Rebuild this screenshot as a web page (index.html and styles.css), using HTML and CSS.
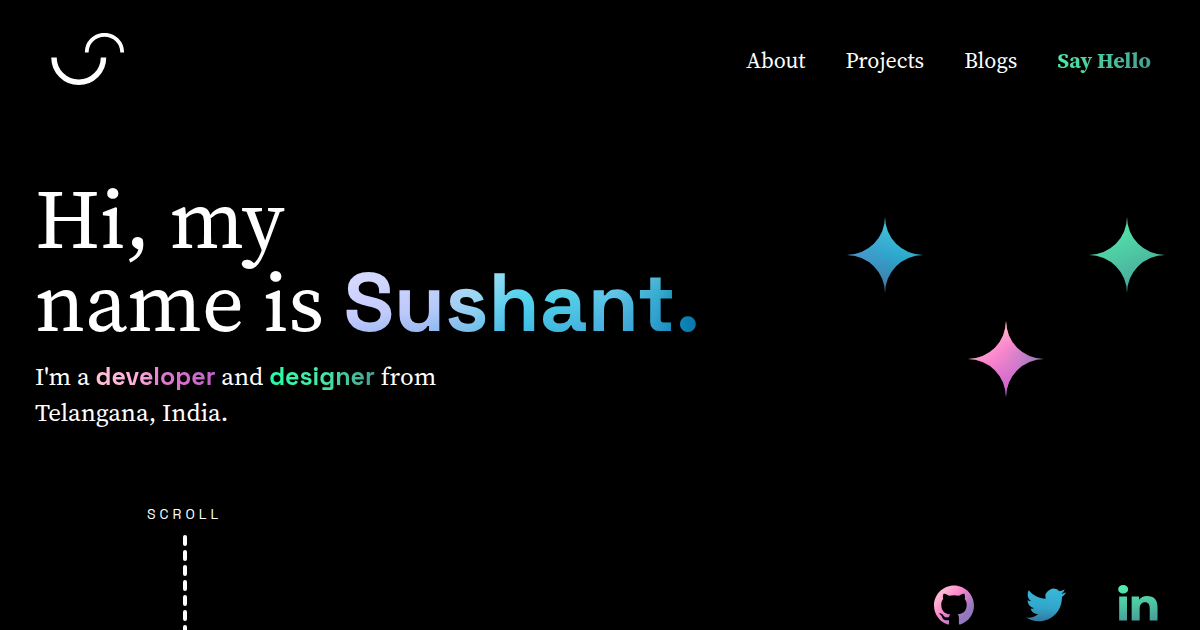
FILE: index.html
```html
<!DOCTYPE html>
<html lang="en">
<head>
<meta charset="utf-8">
<meta name="viewport" content="width=device-width, initial-scale=1">
<title>Sushant</title>
<link rel="stylesheet" href="styles.css">
</head>
<body>
<header class="header">
  <a class="logo" href="#" aria-label="Home">
    <svg width="74" height="52" viewBox="0 0 74 52" fill="none" stroke="#fff">
      <path d="M3 24.5a24.75 24.75 0 0 0 49.5 0" stroke-width="5.5"/>
      <path d="M35.7 19.5a17.75 17.75 0 0 1 35.5 0" stroke-width="3.8"/>
    </svg>
  </a>
  <nav class="nav">
    <a href="#about">About</a>
    <a href="#projects">Projects</a>
    <a href="#blogs">Blogs</a>
    <a class="hello" href="#contact">Say Hello</a>
  </nav>
</header>
<main class="main">
  <section class="hero">
    <div>
      <h1 class="title">Hi, my<br>name is <span class="name">Sushant.</span></h1>
      <p class="intro">I'm a <span class="role developer">developer</span> and <span class="role designer">designer</span> from<br>Telangana, India.</p>
    </div>
    <svg class="stars" width="318" height="180" viewBox="0 0 318 180" aria-hidden="true">
      <defs>
        <linearGradient id="blue" x1=".65" y1="0" x2=".35" y2="1"><stop offset=".1" stop-color="#42c4dc"/><stop offset=".5" stop-color="#2ca5cb"/><stop offset="1" stop-color="#3a6f96"/></linearGradient>
        <linearGradient id="bird" x1=".5" y1="0" x2=".45" y2="1"><stop offset="0" stop-color="#38b8d8"/><stop offset=".6" stop-color="#31a5cb"/><stop offset="1" stop-color="#34789f"/></linearGradient>
        <linearGradient id="haze" x1="0" y1=".5" x2=".6" y2=".4"><stop offset="0" stop-color="#6b8fd8"/><stop offset="1" stop-color="#6b8fd8" stop-opacity="0"/></linearGradient>
        <linearGradient id="green" x1=".3" y1="0" x2=".75" y2="1"><stop offset="0" stop-color="#55edaa"/><stop offset="1" stop-color="#479f9c"/></linearGradient>
        <linearGradient id="letters" x1=".45" y1="0" x2=".55" y2="1"><stop offset="0" stop-color="#55edaa"/><stop offset="1" stop-color="#479f9c"/></linearGradient>
        <linearGradient id="pink" x1=".2" y1=".2" x2=".8" y2=".7"><stop offset="0" stop-color="#ffb5d2"/><stop offset=".4" stop-color="#fa86cd"/><stop offset=".7" stop-color="#cc7fc9"/><stop offset="1" stop-color="#9279bd"/></linearGradient>
        <linearGradient id="magenta" x1=".55" y1="0" x2=".4" y2="1"><stop offset=".05" stop-color="#ffc5c9"/><stop offset=".4" stop-color="#ff80d0" stop-opacity="0"/><stop offset="1" stop-color="#d750cf"/></linearGradient>
        <path id="star" d="M38 0A38 38 0 0 0 76 38A38 38 0 0 0 38 76A38 38 0 0 0 0 38A38 38 0 0 0 38 0z"/>
      </defs>
      <use href="#star" fill="url(#blue)"/>
      <use href="#star" fill="url(#haze)" opacity=".5"/>
      <use href="#star" x="242" fill="url(#green)"/>
      <use href="#star" x="121" y="104" fill="url(#pink)"/>
      <use href="#star" x="121" y="104" fill="url(#magenta)"/>
    </svg>
  </section>
  <section class="bottom">
    <a class="scroll" href="#about">
      <span class="scroll-label">SCROLL</span>
      <svg class="scroll-line" width="4" aria-hidden="true"><line x1="2" y1="2" x2="2" y2="100%" stroke="#fff" stroke-width="4" stroke-linecap="round" stroke-dasharray="7 8"/></svg>
    </a>
    <nav class="social" aria-label="Social">
      <a href="#github" aria-label="GitHub"><svg width="40" height="40" viewBox="0 0 24 24"><path fill="url(#pink)" d="M12 .297c-6.63 0-12 5.373-12 12 0 5.303 3.438 9.8 8.205 11.385.6.113.82-.258.82-.577 0-.285-.01-1.04-.015-2.04-3.338.724-4.042-1.61-4.042-1.61C4.422 18.07 3.633 17.7 3.633 17.7c-1.087-.744.084-.729.084-.729 1.205.084 1.838 1.236 1.838 1.236 1.07 1.835 2.809 1.305 3.495.998.108-.776.417-1.305.76-1.605-2.665-.3-5.466-1.332-5.466-5.93 0-1.31.465-2.38 1.235-3.22-.135-.303-.54-1.523.105-3.176 0 0 1.005-.322 3.3 1.23.96-.267 1.98-.399 3-.405 1.02.006 2.04.138 3 .405 2.28-1.552 3.285-1.23 3.285-1.23.645 1.653.24 2.873.12 3.176.765.84 1.23 1.91 1.23 3.22 0 4.61-2.805 5.625-5.475 5.92.42.36.81 1.096.81 2.22 0 1.606-.015 2.896-.015 3.286 0 .315.21.69.825.57C20.565 22.092 24 17.592 24 12.297c0-6.627-5.373-12-12-12"/></svg></a>
      <a href="#twitter" aria-label="Twitter"><svg width="40" height="40" viewBox="0 0 24 24"><path fill="url(#bird)" d="M23.953 4.57a10 10 0 01-2.825.775 4.958 4.958 0 002.163-2.723c-.951.555-2.005.959-3.127 1.184a4.92 4.92 0 00-8.384 4.482C7.69 8.095 4.067 6.13 1.64 3.162a4.822 4.822 0 00-.666 2.475c0 1.71.87 3.213 2.188 4.096a4.904 4.904 0 01-2.228-.616v.06a4.923 4.923 0 003.946 4.827 4.996 4.996 0 01-2.212.085 4.936 4.936 0 004.604 3.417 9.867 9.867 0 01-6.102 2.105c-.39 0-.779-.023-1.17-.067a13.995 13.995 0 007.557 2.209c9.053 0 13.998-7.496 13.998-13.985 0-.21 0-.42-.015-.63A9.935 9.935 0 0024 4.59z"/></svg></a>
      <a href="#linkedin" aria-label="LinkedIn"><svg width="40" height="40" viewBox="0 0 41 41"><path fill="url(#letters)" d="M5.3 0C8.2 0 10.4 1.8 10.4 4.3S8.2 8.7 5.3 8.7.2 6.8.2 4.3 2.4 0 5.3 0zM1.2 11.8h8v24.7h-8zM14 11.8h7.6V15c1.7-2.4 4.5-3.8 8.1-3.8 7.2 0 10.8 4 10.8 11.3v14h-8V24.2c0-4.4-1.4-6.5-4.7-6.5-3.7 0-5.6 2.4-5.6 6.8v12H14z"/></svg></a>
    </nav>
  </section>
</main>
</body>
</html>
```

FILE: styles.css
```css
* {
  box-sizing: border-box;
}

body {
  margin: 0;
  height: 100vh;
  min-height: 600px;
  display: flex;
  flex-direction: column;
  overflow-x: hidden;
  background: #000;
  color: #fff;
  font-family: "Source Serif Pro", "Source Serif 4", "Liberation Serif", serif;
}

a {
  color: inherit;
  text-decoration: none;
}

svg {
  display: block;
}

.header {
  display: flex;
  justify-content: space-between;
  align-items: center;
  padding: 33px 49px 0 51px;
}

.nav {
  display: flex;
  gap: 40px;
  padding-top: 2px;
  font-size: 22px;
  line-height: 28px;
}

.hello,
.name,
.role {
  color: transparent;
  -webkit-background-clip: text;
  background-clip: text;
}

.hello {
  font-weight: 700;
  background-image: linear-gradient(120deg, #4df0a8, #469c92);
}

.main {
  flex: 1;
  display: flex;
  flex-direction: column;
  padding-top: 93px;
}

.hero {
  display: flex;
  justify-content: space-between;
  align-items: center;
  padding: 0 35px;
}

.title {
  margin: 0 0 14px;
  font-size: 83px;
  font-weight: 400;
  line-height: 83px;
}

.name {
  font-family: "Space Grotesk", Inter, "Liberation Sans", sans-serif;
  font-weight: 600;
  line-height: 1;
  background-image:
    linear-gradient(175deg, rgba(255, 255, 255, .25) 25%, rgba(255, 255, 255, 0) 50%, rgba(30, 130, 205, .4) 80%),
    linear-gradient(100deg, #c9ccff 0%, #b9c8fa 25%, #92d3f2 38%, #4ed2ee 48%, #52cee6 62%, #62c4ea 74%, #3aaed0 86%, #0080a4 95%, #006085 100%);
}

.intro {
  margin: 0;
  font-size: 25px;
  line-height: 36px;
}

.role {
  font-family: "Space Grotesk", Inter, "Liberation Sans", sans-serif;
  font-weight: 600;
  line-height: 1;
}

.developer {
  background-image: linear-gradient(100deg, #ffc4d8, #ffaddc 35%, #e27bd0 55%, #c060c8);
}

.designer {
  background-image: linear-gradient(100deg, #22ffa4, #48e8a8 50%, #469c92);
}

.stars {
  margin-top: 6px;
}

.bottom {
  flex: 1;
  display: flex;
  justify-content: space-between;
  min-height: 100px;
  padding: 76px 42px 0 147px;
}

.scroll {
  display: flex;
  flex-direction: column;
  align-items: center;
  gap: 13px;
}

.scroll-label {
  font-family: "Space Grotesk", "Liberation Sans", sans-serif;
  font-size: 14px;
  line-height: 16px;
  letter-spacing: 4px;
}

.scroll-line {
  flex: 1 1 0;
  height: 0;
}

.social {
  display: flex;
  align-self: flex-end;
  gap: 52px;
  padding-bottom: 5px;
}
```
